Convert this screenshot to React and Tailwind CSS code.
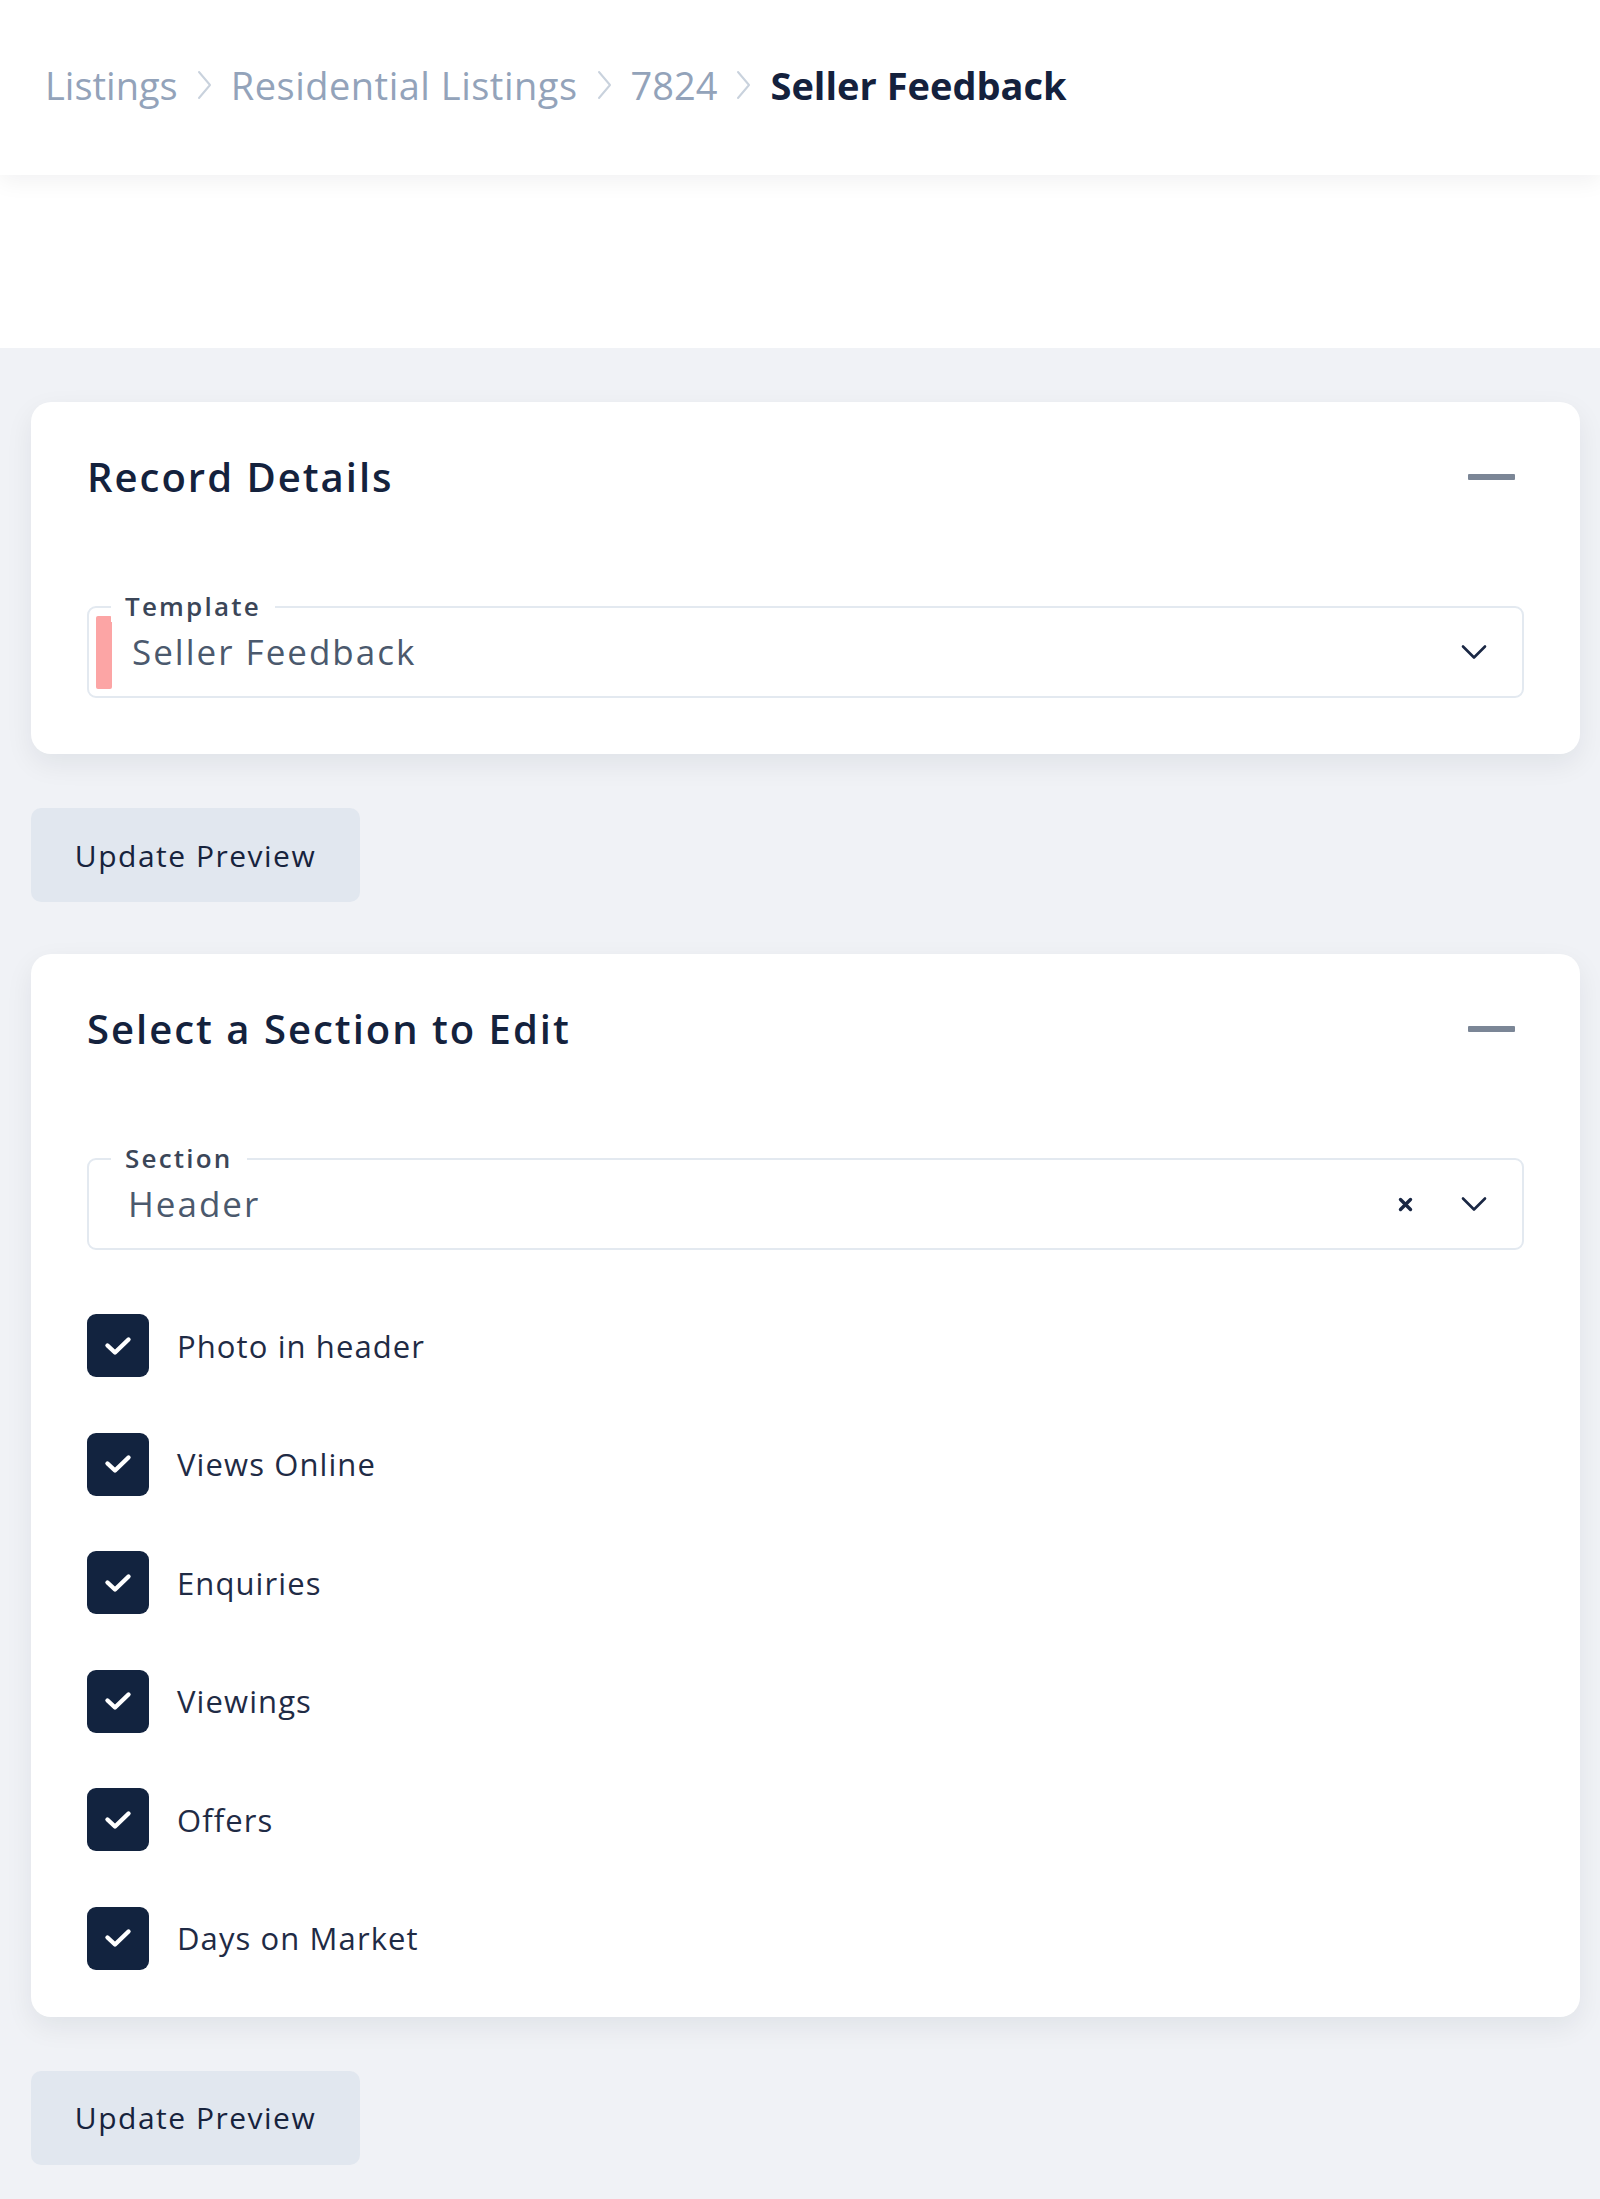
import React from "react";

const FONT = { fontFamily: '"Open Sans", "Noto Sans", sans-serif' };

function Chevron() {
  return (
    <svg width="17" height="32" viewBox="0 0 17 32" fill="none" className="shrink-0">
      <path d="M3 3l11 13L3 29" stroke="#c9d2dd" strokeWidth="2" strokeLinecap="round" strokeLinejoin="round" />
    </svg>
  );
}

function ChevronDown() {
  return (
    <svg width="26" height="16" viewBox="0 0 26 16" fill="none" className="shrink-0">
      <path d="M2 2.5l11 11 11-11" stroke="#1a2744" strokeWidth="2.6" strokeLinecap="round" strokeLinejoin="round" />
    </svg>
  );
}

function XIcon() {
  return (
    <svg width="15" height="15" viewBox="0 0 15 15" fill="none" className="shrink-0">
      <path d="M2.5 2.5l10 10M12.5 2.5l-10 10" stroke="#1a2744" strokeWidth="3.4" strokeLinecap="round" />
    </svg>
  );
}

function Check() {
  return (
    <svg width="32" height="24" viewBox="0 0 32 24" fill="none">
      <path d="M5.5 11.5L13 18.5L26.5 5.5" stroke="#ffffff" strokeWidth="4.4" strokeLinecap="round" strokeLinejoin="round" />
    </svg>
  );
}

function CardHeader({ title }) {
  return (
    <div className="flex items-center justify-between h-[56px]">
      <h2 className="text-[40px] leading-[56px] font-semibold text-[#14223d] tracking-[2px]">{title}</h2>
      <div className="w-[47px] h-[6px] bg-[#7b8696] rounded-[1px] mr-[9px]" />
    </div>
  );
}

function Field({ label, children }) {
  return (
    <div className="relative h-[92px] border-2 border-[#e3e9f0] rounded-[9px] flex items-center">
      <span className="absolute left-[22px] top-[-18px] bg-white px-[14px] text-[26px] leading-[32px] font-semibold tracking-[2.2px] text-[#3b4658]">
        {label}
      </span>
      {children}
    </div>
  );
}

function CheckRow({ label }) {
  return (
    <div className="flex items-center h-[63px]">
      <div className="w-[62px] h-[63px] rounded-[9px] bg-[#12233f] flex items-center justify-center shrink-0">
        <Check />
      </div>
      <span className="ml-[28px] text-[31px] leading-[40px] tracking-[1.1px] text-[#1f2b45]">{label}</span>
    </div>
  );
}

function UpdateButton() {
  return (
    <button className="w-[329px] h-[94px] rounded-[10px] bg-[#e1e7ef] flex items-center justify-center text-[30px] tracking-[1.5px] text-[#17233d]">
      Update Preview
    </button>
  );
}

export default function App() {
  const items = ["Photo in header", "Views Online", "Enquiries", "Viewings", "Offers", "Days on Market"];
  return (
    <div style={FONT} className="w-[1600px] min-h-[2199px] bg-[#f0f2f6]">
      <header className="relative z-10 h-[175px] bg-white shadow-[0_6px_22px_rgba(15,23,42,0.06)] flex items-center pl-[45px] pb-[5px] gap-[18px] text-[38px] leading-[52px]">
        <span className="text-[#93a3ba]">Listings</span>
        <Chevron />
        <span className="text-[#93a3ba] tracking-[0.5px]">Residential Listings</span>
        <Chevron />
        <span className="text-[#93a3ba]">7824</span>
        <Chevron />
        <span className="text-[#14213d] font-bold">Seller Feedback</span>
      </header>
      <div className="h-[173px] bg-white" />

      <main className="pl-[31px] pr-[20px] pt-[54px] pb-[34px] flex flex-col">
        <section className="bg-white rounded-[20px] shadow-[0_10px_28px_rgba(15,23,42,0.07)] px-[56px] pt-[47px] pb-[56px]">
          <CardHeader title="Record Details" />
          <div className="mt-[101px]">
            <Field label="Template">
              <div className="ml-[7px] w-[16px] h-[73px] bg-[#fca5a5] rounded-[2px]" />
              <span className="ml-[20px] text-[35px] tracking-[2px] text-[#4b596d] flex-1">Seller Feedback</span>
              <div className="mr-[35px]">
                <ChevronDown />
              </div>
            </Field>
          </div>
        </section>

        <div className="mt-[54px]">
          <UpdateButton />
        </div>

        <section className="mt-[52px] bg-white rounded-[20px] shadow-[0_10px_28px_rgba(15,23,42,0.07)] px-[56px] pt-[47px] pb-[47px]">
          <CardHeader title="Select a Section to Edit" />
          <div className="mt-[101px]">
            <Field label="Section">
              <span className="ml-[39px] text-[35px] tracking-[2px] text-[#4b596d] flex-1">Header</span>
              <div className="mr-[48px]">
                <XIcon />
              </div>
              <div className="mr-[35px]">
                <ChevronDown />
              </div>
            </Field>
          </div>
          <div className="mt-[64px] flex flex-col gap-[55.5px]">
            {items.map((t) => (
              <CheckRow key={t} label={t} />
            ))}
          </div>
        </section>

        <div className="mt-[54px]">
          <UpdateButton />
        </div>
      </main>
    </div>
  );
}
